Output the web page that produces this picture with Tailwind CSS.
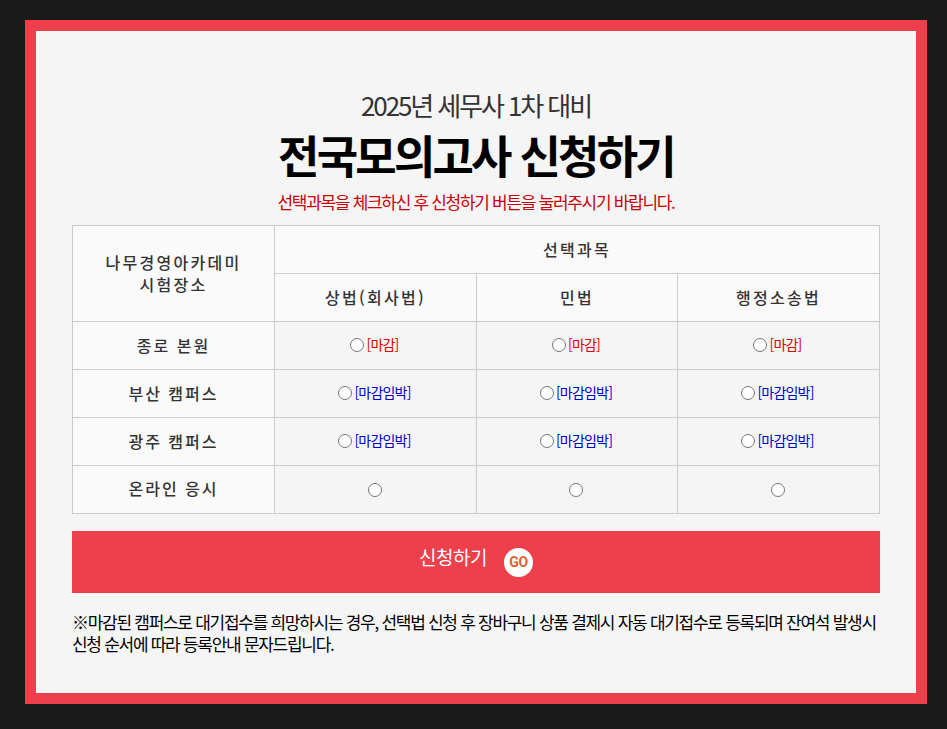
<!DOCTYPE html>
<html lang="ko">
<head>
<meta charset="UTF-8">
<title>전국모의고사 신청하기</title>
<script src="https://cdn.jsdelivr.net/npm/@tailwindcss/browser@4"></script>
</head>
<body class="bg-[#1a1a1a] h-[729px] overflow-hidden font-['Noto_Sans_CJK_KR','Noto_Sans',sans-serif]">
  <div class="pt-5 pl-[25px]">
    <div class="w-[902px] h-[684px] border-[11px] border-[#ee404c] bg-[#f5f5f5] pt-[57px] px-9">
      <!-- Title -->
      <div class="text-center">
        <p class="text-[26px] leading-[34px] tracking-[-2.1px] text-[#333]">2025년 세무사 1차 대비</p>
        <h1 class="mt-[3px] text-[45px] leading-[60px] font-bold tracking-[-2.8px] text-black">전국모의고사 신청하기</h1>
        <p class="mt-[4px] text-[17px] leading-[26px] tracking-[-1.3px] text-[#c8000a]">선택과목을 체크하신 후 신청하기 버튼을 눌러주시기 바랍니다.</p>
      </div>

      <!-- Table -->
      <table class="mt-[10px] w-[808px] table-fixed border-collapse text-[16px] text-[#333] tracking-[2.3px]">
        <colgroup>
          <col class="w-[202px]"><col class="w-[202px]"><col class="w-[201px]"><col class="w-[202px]">
        </colgroup>
        <tr class="h-12 bg-[#fafafa]">
          <th rowspan="2" class="border border-[#ccc] font-medium leading-[22px] pb-[2px]">나무경영아카데미<br>시험장소</th>
          <th colspan="3" class="border border-[#ccc] font-medium pb-[2px]">선택과목</th>
        </tr>
        <tr class="h-12 bg-[#fafafa]">
          <th class="border border-[#ccc] font-medium pb-[2px]">상법(회사법)</th>
          <th class="border border-[#ccc] font-medium pb-[2px]">민법</th>
          <th class="border border-[#ccc] font-medium pb-[2px]">행정소송법</th>
        </tr>
        <tr class="h-12">
          <th class="border border-[#ccc] bg-[#fafafa] font-medium tracking-[2px] pb-[2px]">종로 본원</th>
          <td class="border border-[#ccc] text-center pr-[2px] pb-[2px]"><label class="inline-flex items-center gap-[2px] text-[14px] font-normal tracking-[-0.8px] text-[#e00000]"><input type="radio" name="a1" class="appearance-none size-[14px] rounded-full border border-[#767676] bg-white">[마감]</label></td>
          <td class="border border-[#ccc] text-center pr-[2px] pb-[2px]"><label class="inline-flex items-center gap-[2px] text-[14px] font-normal tracking-[-0.8px] text-[#e00000]"><input type="radio" name="a2" class="appearance-none size-[14px] rounded-full border border-[#767676] bg-white">[마감]</label></td>
          <td class="border border-[#ccc] text-center pr-[2px] pb-[2px]"><label class="inline-flex items-center gap-[2px] text-[14px] font-normal tracking-[-0.8px] text-[#e00000]"><input type="radio" name="a3" class="appearance-none size-[14px] rounded-full border border-[#767676] bg-white">[마감]</label></td>
        </tr>
        <tr class="h-12">
          <th class="border border-[#ccc] bg-[#fafafa] font-medium tracking-[2px] pb-[2px]">부산 캠퍼스</th>
          <td class="border border-[#ccc] text-center pr-[2px] pb-[2px]"><label class="inline-flex items-center gap-[2px] text-[14px] font-normal tracking-[-0.8px] text-[#0000cc]"><input type="radio" name="a1" class="appearance-none size-[14px] rounded-full border border-[#767676] bg-white">[마감임박]</label></td>
          <td class="border border-[#ccc] text-center pr-[2px] pb-[2px]"><label class="inline-flex items-center gap-[2px] text-[14px] font-normal tracking-[-0.8px] text-[#0000cc]"><input type="radio" name="a2" class="appearance-none size-[14px] rounded-full border border-[#767676] bg-white">[마감임박]</label></td>
          <td class="border border-[#ccc] text-center pr-[2px] pb-[2px]"><label class="inline-flex items-center gap-[2px] text-[14px] font-normal tracking-[-0.8px] text-[#0000cc]"><input type="radio" name="a3" class="appearance-none size-[14px] rounded-full border border-[#767676] bg-white">[마감임박]</label></td>
        </tr>
        <tr class="h-12">
          <th class="border border-[#ccc] bg-[#fafafa] font-medium tracking-[2px] pb-[2px]">광주 캠퍼스</th>
          <td class="border border-[#ccc] text-center pr-[2px] pb-[2px]"><label class="inline-flex items-center gap-[2px] text-[14px] font-normal tracking-[-0.8px] text-[#0000cc]"><input type="radio" name="a1" class="appearance-none size-[14px] rounded-full border border-[#767676] bg-white">[마감임박]</label></td>
          <td class="border border-[#ccc] text-center pr-[2px] pb-[2px]"><label class="inline-flex items-center gap-[2px] text-[14px] font-normal tracking-[-0.8px] text-[#0000cc]"><input type="radio" name="a2" class="appearance-none size-[14px] rounded-full border border-[#767676] bg-white">[마감임박]</label></td>
          <td class="border border-[#ccc] text-center pr-[2px] pb-[2px]"><label class="inline-flex items-center gap-[2px] text-[14px] font-normal tracking-[-0.8px] text-[#0000cc]"><input type="radio" name="a3" class="appearance-none size-[14px] rounded-full border border-[#767676] bg-white">[마감임박]</label></td>
        </tr>
        <tr class="h-12">
          <th class="border border-[#ccc] bg-[#fafafa] font-medium tracking-[2px] pb-[3px]">온라인 응시</th>
          <td class="border border-[#ccc] text-center pr-[2px] pb-[4px]"><input type="radio" name="a1" class="appearance-none size-[14px] rounded-full border border-[#767676] bg-white align-middle"></td>
          <td class="border border-[#ccc] text-center pr-[2px] pb-[4px]"><input type="radio" name="a2" class="appearance-none size-[14px] rounded-full border border-[#767676] bg-white align-middle"></td>
          <td class="border border-[#ccc] text-center pr-[2px] pb-[4px]"><input type="radio" name="a3" class="appearance-none size-[14px] rounded-full border border-[#767676] bg-white align-middle"></td>
        </tr>
      </table>

      <!-- Button -->
      <button class="mt-[17px] w-[808px] h-[62px] bg-[#ee404c] flex items-center justify-center gap-[17px] text-white text-[19px] tracking-[-0.5px]">
        <span class="-mt-[10px]">신청하기</span>
        <span class="size-[29px] rounded-full bg-white text-[#d9662f] text-[14px] font-bold tracking-[-0.5px] flex items-center justify-center font-['Roboto',sans-serif]">GO</span>
      </button>

      <!-- Note -->
      <p class="mt-[18px] w-[808px] text-[17px] leading-[22px] tracking-[-1.28px] text-black">※마감된 캠퍼스로 대기접수를 희망하시는 경우, 선택법 신청 후 장바구니 상품 결제시 자동 대기접수로 등록되며 잔여석 발생시<br>신청 순서에 따라 등록안내 문자드립니다.</p>
    </div>
  </div>
</body>
</html>
